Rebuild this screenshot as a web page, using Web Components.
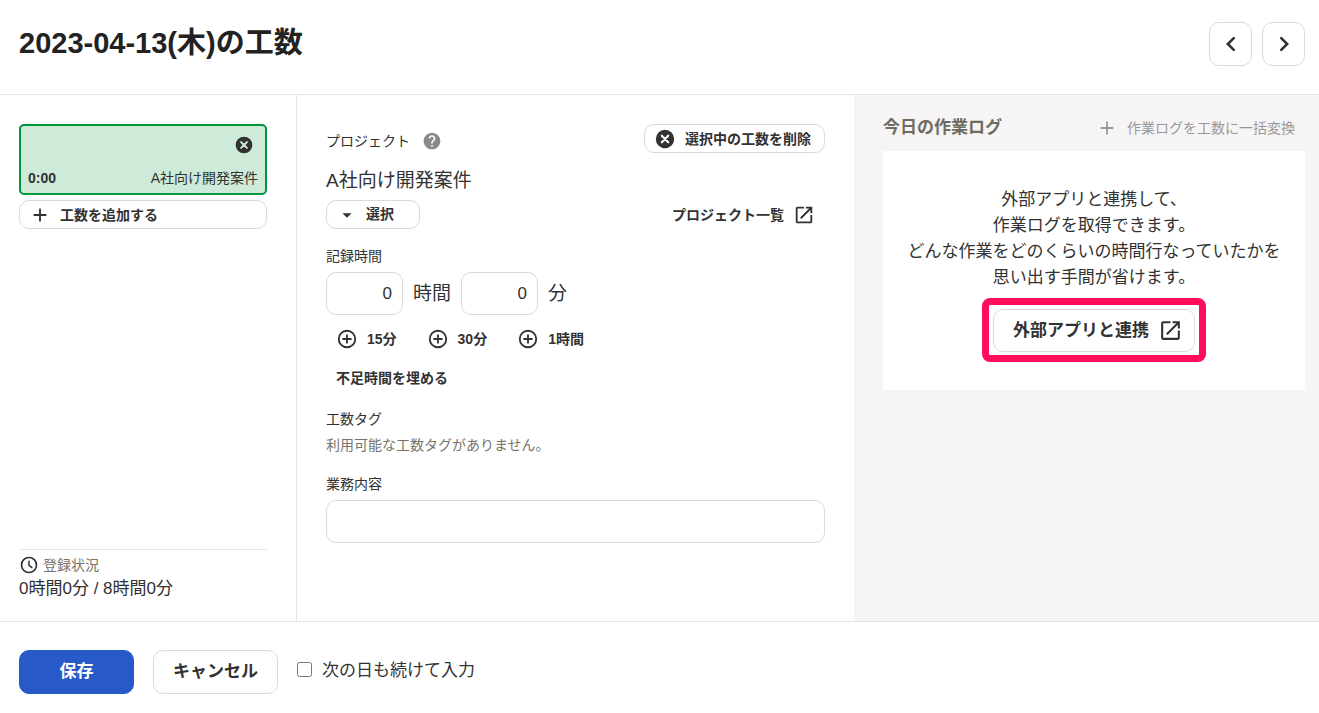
<!DOCTYPE html>
<html lang="ja">
<head>
<meta charset="utf-8">
<meta name="viewport" content="width=device-width, initial-scale=1">
<title>2023-04-13(木)の工数</title>
<style>
  body {
    margin: 0;
    font-family: "Liberation Sans", "Noto Sans CJK JP", sans-serif;
    font-size: 14px;
    color: #323232;
    background: #fff;
    --line: #e5e5e5;
    --control-line: #dadada;
    --muted: #77736a;
  }
</style>
</head>
<body>
<workload-page></workload-page>
<script>
const ICONS = {
  plus: '<path d="M12 5v14M5 12h14" fill="none" stroke="currentColor" stroke-width="2"/>',
  plusCircle: '<circle cx="12" cy="12" r="9" fill="none" stroke="currentColor" stroke-width="2"/><path d="M12 7v10M7 12h10" fill="none" stroke="currentColor" stroke-width="2"/>',
  cancel: '<circle cx="12" cy="12" r="10"/><path d="M8.500 8.500l7 7M15.500 8.500l-7 7" stroke="var(--cross, #fff)" stroke-width="2.400" stroke-linecap="round"/>',
  help: '<path d="M12 2C6.480 2 2 6.480 2 12s4.480 10 10 10 10-4.480 10-10S17.520 2 12 2zm1 17h-2v-2h2v2zm2.070-7.750l-.9.92C13.450 12.900 13 13.500 13 15h-2v-.5c0-1.100.45-2.100 1.170-2.830l1.240-1.260c.37-.36.59-.86.59-1.410 0-1.100-.9-2-2-2s-2 .9-2 2H8c0-2.210 1.790-4 4-4s4 1.790 4 4c0 .88-.36 1.680-.93 2.250z"/>',
  external: '<path d="M19 19H5V5h7V3H5c-1.110 0-2 .9-2 2v14c0 1.100.89 2 2 2h14c1.100 0 2-.9 2-2v-7h-2v7zM14 3v2h3.590l-9.830 9.830 1.410 1.410L19 6.410V10h2V3h-7z"/>',
  clock: '<circle cx="12" cy="12" r="9" fill="none" stroke="currentColor" stroke-width="2"/><path d="M12 7v5.500l4 3" fill="none" stroke="currentColor" stroke-width="1.800"/>',
  caret: '<path d="M7 10l5 5 5-5z"/>',
  left: '<path d="M15 5.500L8.500 12l6.500 6.500" fill="none" stroke="currentColor" stroke-width="2.800" stroke-linecap="round"/>',
  right: '<path d="M9 5.500l6.500 6.500L9 18.500" fill="none" stroke="currentColor" stroke-width="2.800" stroke-linecap="round"/>'
};

class AppIcon extends HTMLElement {
  connectedCallback() {
    if (this.shadowRoot) return;
    this.attachShadow({ mode: "open" }).innerHTML = `
      <style>
        :host { display: block; flex: none; width: 22px; height: 22px; }
        svg { display: block; width: 100%; height: 100%; fill: currentColor; }
      </style>
      <svg viewBox="0 0 24 24" aria-hidden="true">${ICONS[this.getAttribute("name")]}</svg>`;
  }
}
customElements.define("app-icon", AppIcon);

/* Button or, with an href, a link; variants: primary, large, plain, square, app */
class UiButton extends HTMLElement {
  connectedCallback() {
    if (this.shadowRoot) return;
    const href = this.getAttribute("href");
    const tag = href ? "a" : "button";
    const label = this.getAttribute("label");
    const attrs = (href ? `href="${href}"` : 'type="button"')
      + (this.hasAttribute("disabled") ? " disabled" : "")
      + (label ? ` aria-label="${label}"` : "");
    this.attachShadow({ mode: "open" }).innerHTML = `
      <style>
        :host { display: block; }
        a, button {
          box-sizing: border-box; width: 100%; min-height: 29px; margin: 0; padding: 0 9px;
          display: flex; align-items: center; gap: 9px;
          border: 1px solid var(--control-line); border-radius: 10px; background: #fff;
          font: bold 14px/22px "Liberation Sans", "Noto Sans CJK JP", sans-serif;
          color: inherit; text-decoration: none; white-space: nowrap; cursor: pointer;
        }
        :host([plain]) :is(a, button) { border-color: transparent; background: none; }
        :host([large]) :is(a, button) { min-height: 44px; padding: 0 19px 2px; justify-content: center; font-size: 17px; line-height: 25px; }
        :host([app]) :is(a, button) { min-height: 43px; padding: 0 11px 0 19px; }
        :host([primary]) :is(a, button) { background: #275ac8; border-color: #275ac8; color: #fff; }
        :host([square]) :is(a, button) { width: 43px; min-height: 44px; padding: 0; justify-content: center; }
        button:disabled { color: #999; font-weight: normal; cursor: default; }
      </style>
      <${tag} ${attrs}><slot></slot></${tag}>`;
  }
}
customElements.define("ui-button", UiButton);

class PageHeader extends HTMLElement {
  constructor() {
    super();
    this.attachShadow({ mode: "open" }).innerHTML = `
      <style>
        :host { display: flex; justify-content: space-between; align-items: flex-start; padding: 22px 14px 28px 19px; border-bottom: 1px solid var(--line); }
        h1 { margin: 0; font-size: 29px; line-height: 42px; color: #222; }
        nav { display: flex; gap: 10px; }
      </style>
      <h1><slot></slot></h1>
      <nav aria-label="日付">
        <ui-button square label="前の日"><app-icon name="left"></app-icon></ui-button>
        <ui-button square label="次の日"><app-icon name="right"></app-icon></ui-button>
      </nav>`;
  }
}
customElements.define("page-header", PageHeader);

class WorkCard extends HTMLElement {
  constructor() {
    super();
    this.attachShadow({ mode: "open" }).innerHTML = `
      <style>
        :host {
          box-sizing: border-box; min-height: 71px; padding: 9px 7px 4px;
          display: flex; flex-direction: column; justify-content: space-between;
          border: 2px solid #00963c; border-radius: 5px; background: #cdebd8; --cross: #cdebd8;
        }
        button { align-self: flex-end; margin: 0 4px; padding: 0; border: 0; background: none; color: inherit; cursor: pointer; }
        app-icon { width: 20px; height: 20px; }
        div { display: flex; justify-content: space-between; gap: 8px; line-height: 22px; }
      </style>
      <button type="button" aria-label="削除"><app-icon name="cancel"></app-icon></button>
      <div><b><slot name="time"></slot></b><span><slot></slot></span></div>`;
  }
}
customElements.define("work-card", WorkCard);

class WorkSidebar extends HTMLElement {
  constructor() {
    super();
    this.attachShadow({ mode: "open" }).innerHTML = `
      <style>
        :host { display: flex; flex-direction: column; padding: 29px 29px 20px 19px; border-right: 1px solid var(--line); }
        ui-button { margin-top: 5px; }
        footer { margin-top: auto; padding-top: 4px; border-top: 1px solid var(--line); }
        .caption { display: flex; align-items: center; gap: 4px; line-height: 22px; color: var(--muted); }
        app-icon { color: #323232; }
        .caption app-icon { width: 20px; height: 20px; }
        p { margin: 0; font-size: 17px; line-height: 25px; }
      </style>
      <work-card><span slot="time">0:00</span>A社向け開発案件</work-card>
      <ui-button><app-icon name="plus"></app-icon>工数を追加する</ui-button>
      <footer>
        <div class="caption"><app-icon name="clock"></app-icon>登録状況</div>
        <p>0時間0分 / 8時間0分</p>
      </footer>`;
  }
}
customElements.define("work-sidebar", WorkSidebar);

class WorkForm extends HTMLElement {
  constructor() {
    super();
    this.attachShadow({ mode: "open" }).innerHTML = `
      <style>
        :host { display: block; padding: 29px; line-height: 22px; }
        .row { display: flex; align-items: center; }
        .between { justify-content: space-between; }
        .caption { display: flex; align-items: center; gap: 12px; padding-top: 4px; }
        .help { color: #8c8989; width: 20px; height: 20px; }
        .delete { min-width: 181px; }
        h2 { margin: 14px 0 5px; font-size: 19px; line-height: 28px; font-weight: normal; }
        .picker { display: grid; align-items: center; width: 94px; }
        .picker > * { grid-area: 1 / 1; }
        .picker app-icon { margin-left: 10px; pointer-events: none; z-index: 1; }
        select {
          box-sizing: border-box; width: 100%; height: 29px; margin: 0; padding: 0 9px 2px 39px; appearance: none;
          border: 1px solid var(--control-line); border-radius: 10px; background: #fff; color: inherit;
          font: bold 14px/22px "Liberation Sans", "Noto Sans CJK JP", sans-serif;
        }
        .field { display: block; margin-top: 16px; }
        input {
          box-sizing: border-box; width: 100%; height: 43px; margin: 0; padding: 0 10px;
          border: 1px solid var(--control-line); border-radius: 10px; background: #fff; color: inherit;
          font: 17px "Liberation Sans", "Noto Sans CJK JP", sans-serif;
        }
        .time { margin-top: 5px; gap: 10px; font-size: 19px; }
        .time input { width: 77px; text-align: right; }
        .quick { margin: 9px 0 10px; gap: 10px; }
        .fill { width: max-content; }
        p { margin: 4px 0 17px; color: var(--muted); }
        .note { margin-top: 5px; }
      </style>
      <div class="row between">
        <div class="caption">プロジェクト<app-icon class="help" name="help"></app-icon></div>
        <ui-button class="delete"><app-icon name="cancel"></app-icon>選択中の工数を削除</ui-button>
      </div>
      <h2>A社向け開発案件</h2>
      <div class="row between">
        <div class="picker">
          <app-icon name="caret"></app-icon>
          <select aria-label="プロジェクト"><option>選択</option></select>
        </div>
        <ui-button plain href="#projects">プロジェクト一覧<app-icon name="external"></app-icon></ui-button>
      </div>
      <label class="field" for="hours">記録時間</label>
      <div class="row time">
        <input id="hours" type="text" inputmode="numeric" value="0"><label for="hours">時間</label>
        <input id="minutes" type="text" inputmode="numeric" value="0"><label for="minutes">分</label>
      </div>
      <div class="row quick">
        <ui-button plain><app-icon name="plusCircle"></app-icon>15分</ui-button>
        <ui-button plain><app-icon name="plusCircle"></app-icon>30分</ui-button>
        <ui-button plain><app-icon name="plusCircle"></app-icon>1時間</ui-button>
      </div>
      <ui-button class="fill" plain>不足時間を埋める</ui-button>
      <div class="field">工数タグ</div>
      <p>利用可能な工数タグがありません。</p>
      <label for="note">業務内容</label>
      <input class="note" id="note" type="text">`;
  }
}
customElements.define("work-form", WorkForm);

class WorkLog extends HTMLElement {
  constructor() {
    super();
    this.attachShadow({ mode: "open" }).innerHTML = `
      <style>
        :host { display: block; padding: 18px 14px 29px 29px; background: #f6f4f5; }
        header { display: flex; justify-content: space-between; align-items: center; margin-bottom: 9px; }
        h2 { margin: 0; font-size: 17px; line-height: 25px; color: #6e6b60; }
        .convert { min-width: 219px; }
        section { padding: 36px 20px 28px; display: flex; flex-direction: column; align-items: center; gap: 7px; background: #fff; }
        p { margin: 0; font-size: 17px; line-height: 26px; text-align: center; }
        .mark { padding: 4px 4px 3px; border: 7px solid #ff0f5b; border-radius: 8px; }
        .mark app-icon { width: 25px; height: 25px; }
      </style>
      <header>
        <h2>今日の作業ログ</h2>
        <ui-button class="convert" plain disabled><app-icon name="plus"></app-icon>作業ログを工数に一括変換</ui-button>
      </header>
      <section>
        <p>外部アプリと連携して、<br>作業ログを取得できます。<br>どんな作業をどのくらいの時間行なっていたかを<br>思い出す手間が省けます。</p>
        <div class="mark"><ui-button large app href="#apps">外部アプリと連携<app-icon name="external"></app-icon></ui-button></div>
      </section>`;
  }
}
customElements.define("work-log", WorkLog);

class FormActions extends HTMLElement {
  constructor() {
    super();
    this.attachShadow({ mode: "open" }).innerHTML = `
      <style>
        :host { display: flex; align-items: center; gap: 19px; padding: 28px 19px 19px; border-top: 1px solid var(--line); }
        .save { width: 115px; }
        .cancel { width: 125px; }
        label { display: flex; align-items: center; gap: 10px; padding-bottom: 3px; font-size: 17px; line-height: 25px; }
        input { width: 15px; height: 15px; margin: 0 0 2px; }
      </style>
      <ui-button class="save" large primary>保存</ui-button>
      <ui-button class="cancel" large>キャンセル</ui-button>
      <label><input type="checkbox">次の日も続けて入力</label>`;
  }
}
customElements.define("form-actions", FormActions);

class WorkloadPage extends HTMLElement {
  constructor() {
    super();
    this.attachShadow({ mode: "open" }).innerHTML = `
      <style>
        :host { display: flex; flex-direction: column; min-height: 100vh; }
        main { flex: 1; display: grid; grid-template-columns: 297px minmax(0, 557fr) minmax(0, 465fr); }
        work-sidebar { min-width: 0; }
      </style>
      <page-header>2023-04-13(木)の工数</page-header>
      <main>
        <work-sidebar></work-sidebar>
        <work-form></work-form>
        <work-log></work-log>
      </main>
      <form-actions></form-actions>`;
  }
}
customElements.define("workload-page", WorkloadPage);
</script>
</body>
</html>
